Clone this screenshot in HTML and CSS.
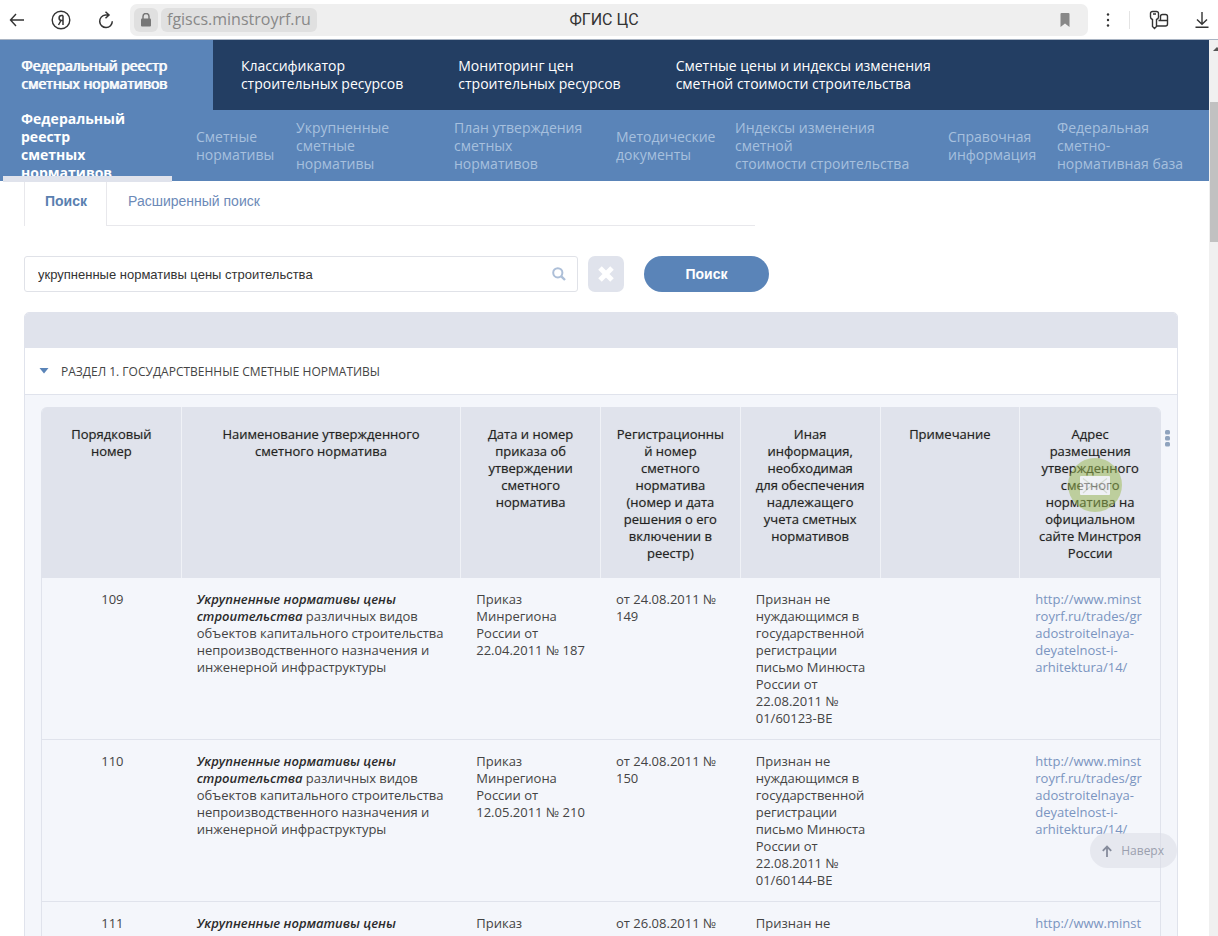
FILE: index.html
```html
<!DOCTYPE html>
<html lang="ru">
<head>
<meta charset="utf-8">
<title>ФГИС ЦС</title>
<link rel="stylesheet" href="styles.css">
</head>
<body>
<header class="browser">
  <button class="tool" aria-label="Назад"><svg width="16" height="16" viewBox="0 0 16 16"><path d="M15 8H1.500M7 2L1.500 8l5.500 6"/></svg></button>
  <button class="tool" aria-label="Яндекс"><svg width="20" height="20" viewBox="0 0 20 20"><circle cx="10" cy="10" r="8.800"/><path d="M12 5.500v9.500M12 5.500h-1.500c-3.200 0-3.200 5 0 5H12M10 10.500L7.500 15" stroke-width="1.500"/></svg></button>
  <button class="tool" aria-label="Обновить"><svg width="18" height="18" viewBox="0 0 18 18"><path d="M11.500 4H8.500a6.300 6.300 0 1 0 6.800 6.300M8.500 0.800L12 4l-3.500 3.200" stroke-width="1.500"/></svg></button>
  <div class="address">
    <span class="lock"><svg width="12" height="14" viewBox="0 0 12 14"><rect x="1" y="5.500" width="10" height="8" rx="1" fill="#777"/><path d="M3 6V3.500a3 3 0 0 1 6 0V6" stroke="#777"/></svg></span>
    <span class="host">fgiscs.minstroyrf.ru</span>
    <span class="doc-title">ФГИС ЦС</span>
    <svg class="bookmark" width="10" height="14" viewBox="0 0 10 14"><path d="M1.500 0h7a1 1 0 0 1 1 1v13L5 10.500.5 14V1a1 1 0 0 1 1-1z" fill="#888" stroke="none"/></svg>
  </div>
  <button class="tool" aria-label="Меню"><svg width="4" height="16" viewBox="0 0 4 16"><g fill="#333" stroke="none"><circle cx="2" cy="2.500" r="1.200"/><circle cx="2" cy="8" r="1.200"/><circle cx="2" cy="13.500" r="1.200"/></g></svg></button>
  <span class="divider"></span>
  <button class="tool" aria-label="Пароли"><svg width="20" height="20" viewBox="0 0 20 20"><path d="M9.500 5V3.500a2 2 0 0 0-2-2h-4a2 2 0 0 0-2 2V7c0 1.300.7 2 2 2.500v7L5.500 18.500l2-2V9.500c1.300-.5 2-1.200 2-2.500zM4 4h3M9.500 10.500h9M7.500 16h9a2 2 0 0 0 2-2V6.500a2 2 0 0 0-2-2h-3a2 2 0 0 0-2 2v4"/></svg></button>
  <button class="tool" aria-label="Загрузки"><svg width="14" height="16" viewBox="0 0 14 16"><path d="M7 0v12M2 7.500L7 12.300l5-4.800M0.500 15.300h13"/></svg></button>
</header>
<div class="viewport">
  <div class="page">
    <nav class="top-nav">
      <a href="#" class="current">Федеральный реестр<br>сметных нормативов</a>
      <a href="#">Классификатор<br>строительных ресурсов</a>
      <a href="#">Мониторинг цен<br>строительных ресурсов</a>
      <a href="#">Сметные цены и индексы изменения<br>сметной стоимости строительства</a>
    </nav>
    <nav class="sub-nav">
      <a href="#" class="current">Федеральный<br>реестр<br>сметных<br>нормативов</a>
      <a href="#">Сметные<br>нормативы</a>
      <a href="#">Укрупненные<br>сметные<br>нормативы</a>
      <a href="#">План утверждения<br>сметных<br>нормативов</a>
      <a href="#">Методические<br>документы</a>
      <a href="#">Индексы изменения<br>сметной<br>стоимости строительства</a>
      <a href="#">Справочная<br>информация</a>
      <a href="#">Федеральная<br>сметно-<br>нормативная база</a>
    </nav>
    <main class="content">
      <div class="tabs">
        <button class="tab active">Поиск</button>
        <button class="tab">Расширенный поиск</button>
        <span class="tab-rest"></span>
      </div>
      <form class="search">
        <label class="field">
          <input type="text" aria-label="Строка поиска" value="укрупненные нормативы цены строительства">
          <svg width="14" height="14" viewBox="0 0 14 14"><circle cx="5.800" cy="5.800" r="4.600"/><path d="M9.300 9.300L13 13" stroke-width="2.400"/></svg>
        </label>
        <button type="button" class="clear" aria-label="Очистить"><svg width="18" height="18" viewBox="0 0 18 18"><path d="M3 3l12 12M15 3L3 15"/></svg></button>
        <button type="button" class="submit">Поиск</button>
      </form>
      <section class="panel">
        <div class="panel-head"></div>
        <h2 class="section-title"><svg width="10" height="6" viewBox="0 0 10 6"><path d="M.5 0h9L5 5.500z"/></svg>РАЗДЕЛ 1. ГОСУДАРСТВЕННЫЕ СМЕТНЫЕ НОРМАТИВЫ</h2>
        <div class="panel-body">
          <button class="kebab" aria-label="Столбцы"><svg width="5" height="17" viewBox="0 0 5 17"><rect width="5" height="4.500" rx="1.500"/><rect y="6" width="5" height="4.500" rx="1.500"/><rect y="12" width="5" height="4.500" rx="1.500"/></svg></button>
          <table class="registry">
            <colgroup><col><col class="wide"><col><col><col><col><col></colgroup>
            <thead>
              <tr>
                <th>Порядковый номер</th>
                <th>Наименование утвержденного сметного норматива</th>
                <th>Дата и номер приказа об утверждении сметного норматива</th>
                <th>Регистрационный номер сметного норматива (номер и дата решения о его включении в реестр)</th>
                <th>Иная информация, необходимая для обеспечения надлежащего учета сметных нормативов</th>
                <th>Примечание</th>
                <th>Адрес размещения утвержденного сметного норматива на официальном сайте Минстроя России</th>
              </tr>
            </thead>
            <tbody>
              <tr>
                <td>109</td>
                <td><em>Укрупненные нормативы цены строительства</em> различных видов объектов капитального строительства непроизводственного назначения и инженерной инфраструктуры</td>
                <td>Приказ Минрегиона России от 22.04.2011 № 187</td>
                <td>от 24.08.2011 № 149</td>
                <td>Признан не нуждающимся в государственной регистрации письмо Минюста России от 22.08.2011 № 01/60123-ВЕ</td>
                <td></td>
                <td><a href="#">http://www.minst<wbr>royrf.ru/trades/gr<wbr>adostroitelnaya-<wbr>deyatelnost-i-<wbr>arhitektura/14/</a></td>
              </tr>
              <tr>
                <td>110</td>
                <td><em>Укрупненные нормативы цены строительства</em> различных видов объектов капитального строительства непроизводственного назначения и инженерной инфраструктуры</td>
                <td>Приказ Минрегиона России от 12.05.2011 № 210</td>
                <td>от 24.08.2011 № 150</td>
                <td>Признан не нуждающимся в государственной регистрации письмо Минюста России от 22.08.2011 № 01/60144-ВЕ</td>
                <td></td>
                <td><a href="#">http://www.minst<wbr>royrf.ru/trades/gr<wbr>adostroitelnaya-<wbr>deyatelnost-i-<wbr>arhitektura/14/</a></td>
              </tr>
              <tr>
                <td>111</td>
                <td><em>Укрупненные нормативы цены</em></td>
                <td>Приказ</td>
                <td>от 26.08.2011 №</td>
                <td>Признан не</td>
                <td></td>
                <td><a href="#">http://www.minst</a></td>
              </tr>
            </tbody>
          </table>
        </div>
      </section>
    </main>
    <button class="mail" aria-label="Написать"><svg width="30" height="19" viewBox="0 0 30 19"><rect width="30" height="19" rx="1" fill="#fff"/><path d="M3 2.500l12 9 12-9M3 17l8-7M27 17l-8-7" fill="none" stroke="#c9d3b8" stroke-width="1.200"/></svg></button>
    <button class="to-top"><svg width="10" height="12" viewBox="0 0 10 12"><path d="M5 12V1.500M.8 5.800L5 1.500l4.200 4.300"/></svg>Наверх</button>
  </div>
  <div class="scrollbar"><span class="arrow"></span><span class="thumb"></span></div>
</div>
</body>
</html>
```
FILE: styles.css
```css
* { box-sizing: border-box; }
body {
  margin: 0;
  height: 100vh;
  display: flex;
  flex-direction: column;
  overflow: hidden;
  background: #fff;
  color: #444;
  font-family: "Open Sans", sans-serif;
  font-size: 13px;
  line-height: 17px;
}
button { border: 0; padding: 0; margin: 0; background: none; font: inherit; color: inherit; }
a { text-decoration: none; }
svg { display: block; flex: none; }

.browser {
  flex: none;
  height: 40px;
  display: flex;
  align-items: center;
  border-bottom: 1px solid #a9b4c3;
  padding: 0 9px;
}
.tool svg { fill: none; stroke: #333; stroke-width: 1.4; }
.browser > .tool + .tool { margin-left: 26px; }
.address {
  position: relative;
  flex: 1;
  height: 32px;
  margin: 0 18px 0 15px;
  padding: 0 18px 0 4px;
  display: flex;
  align-items: center;
  gap: 3px;
  border-radius: 7px;
  background: #efefef;
}
.address svg { fill: none; stroke-width: 1.5; }
.lock, .host {
  height: 24px;
  display: flex;
  align-items: center;
  border-radius: 6px;
  background: #e0e0e0;
}
.lock { padding: 0 6px; }
.host { padding: 0 6px; font-size: 16px; color: #888; }
.doc-title {
  position: absolute;
  inset: 0 10px 0 0;
  display: flex;
  align-items: center;
  justify-content: center;
  font-family: Roboto, sans-serif;
  font-size: 16px;
  color: #333;
}
.bookmark { margin-left: auto; }
.divider { width: 1px; height: 18px; margin: 0 19px; background: #e4e4e4; }

.viewport { flex: 1; min-height: 0; display: flex; }
.page { position: relative; flex: 1; min-width: 0; overflow: hidden; }
.scrollbar { flex: none; width: 9px; background: #f0f0f0; padding: 7px 0 0 1px; }
.arrow {
  display: block;
  width: 0;
  margin-left: 3px;
  border: solid transparent;
  border-width: 0 4px 4px;
  border-bottom-color: #555;
}
.thumb { display: block; height: 140px; margin-top: 51px; background: #c1c1c1; }

.top-nav {
  display: flex;
  height: 70px;
  background: #233e63;
  font-size: 14px;
  line-height: 18px;
}
.top-nav a { display: flex; align-items: center; padding: 0 27px 0 28px; color: #fff; }
.top-nav a.current { padding: 0 46px 0 21px; background: #5a84b8; text-shadow: 1px 0 0 #fff; }
.sub-nav {
  display: grid;
  grid-template-columns: 193fr 100fr 158fr 162fr 119fr 213fr 109fr 152fr;
  height: 71px;
  padding-left: 3px;
  background: #5a84b8;
  font-size: 14px;
  line-height: 18px;
  white-space: nowrap;
}
.sub-nav a { display: flex; align-items: center; color: #a7c0de; }
.sub-nav a.current {
  position: relative;
  margin-right: 24px;
  padding-left: 18px;
  color: #fff;
  font-weight: 700;
}
.sub-nav a.current::after {
  content: "";
  position: absolute;
  inset: auto 0 0;
  height: 6px;
  background: #e0e3ec;
}

.content { padding: 0 31px 0 24px; }
.tabs {
  display: flex;
  width: 64%;
  max-width: 731px;
  height: 45px;
  font-family: "Liberation Sans", sans-serif;
  font-size: 14px;
}
.tab { padding: 0 21px 4px; border-bottom: 1px solid #e8e8ec; color: #6c8ab8; }
.tab.active { padding: 0 19px 4px 20px; border: solid #e8e8ec; border-width: 0 1px; font-weight: 700; color: #5a7fb0; }
.tab-rest { flex: 1; border-bottom: 1px solid #e8e8ec; }
.search { display: flex; margin: 30px 0 20px; height: 36px; font-family: "Liberation Sans", sans-serif; }
.field {
  flex: 0 1 554px;
  display: flex;
  align-items: center;
  padding: 0 11px 0 13px;
  border: 1px solid #e0e2e8;
  border-radius: 3px;
}
.field input { flex: 1; min-width: 0; border: 0; padding: 0; outline: 0; background: none; font: inherit; color: #333; }
.field svg { fill: none; stroke: #adbfd8; stroke-width: 2; }
.clear {
  width: 36px;
  margin: 0 20px 0 10px;
  display: grid;
  place-items: center;
  border-radius: 7px;
  background: #e0e3ec;
}
.clear svg { stroke: #fff; stroke-width: 5; }
.submit { width: 125px; border-radius: 18px; background: #5a84b8; color: #fff; font-size: 14px; font-weight: 700; }

.panel { border: 1px solid #e0e3ec; border-radius: 5px 5px 0 0; overflow: hidden; }
.panel-head { height: 35px; background: #e0e3ec; }
.section-title {
  display: flex;
  align-items: center;
  gap: 12px;
  height: 47px;
  margin: 0;
  padding: 0 14px;
  border-bottom: 1px solid #e0e3ec;
  font-size: 12px;
  font-weight: 400;
}
.section-title svg { fill: #5a84b8; }
.panel-body { position: relative; padding: 12px 16px; background: #f4f6fb; }
.kebab { position: absolute; top: 35px; right: 7px; }
.kebab svg { fill: #8fa3be; }
.registry {
  width: 100%;
  table-layout: fixed;
  border-collapse: separate;
  border-spacing: 0;
  border: solid #e0e3ec;
  border-width: 0 1px;
  border-radius: 6px 6px 0 0;
  overflow: hidden;
}
.wide { width: 25%; }
.registry th, .registry td { padding: 13px 14px 12px 15px; vertical-align: top; overflow-wrap: break-word; }
.registry th {
  padding: 19px 14px 16px;
  background: #e0e3ec;
  border-right: 1px solid #f0f2f7;
  color: #222;
  font-weight: 400;
  text-align: center;
  text-shadow: 0 0 1px #999;
}
.registry th:last-child { border-right: 0; }
.registry td { border-bottom: 1px solid #e0e3ec; text-align: left; }
.registry td:first-child { text-align: center; }
.registry em { color: #2c2c2c; font-weight: 600; }
.registry a { color: #7a94c0; }

.mail {
  position: absolute;
  top: 418px;
  right: 87px;
  width: 54px;
  height: 54px;
  display: grid;
  place-items: center;
  border-radius: 50%;
  background: #9cbb50;
  opacity: .5;
}
.to-top {
  position: absolute;
  right: 32px;
  bottom: 68px;
  height: 35px;
  display: flex;
  align-items: center;
  gap: 9px;
  padding: 0 13px 0 12px;
  border-radius: 18px;
  background: rgba(218, 220, 230, .55);
  color: #9a9fae;
  font-size: 12px;
}
.to-top svg { fill: none; stroke: #858b9b; stroke-width: 1.8; }
```
